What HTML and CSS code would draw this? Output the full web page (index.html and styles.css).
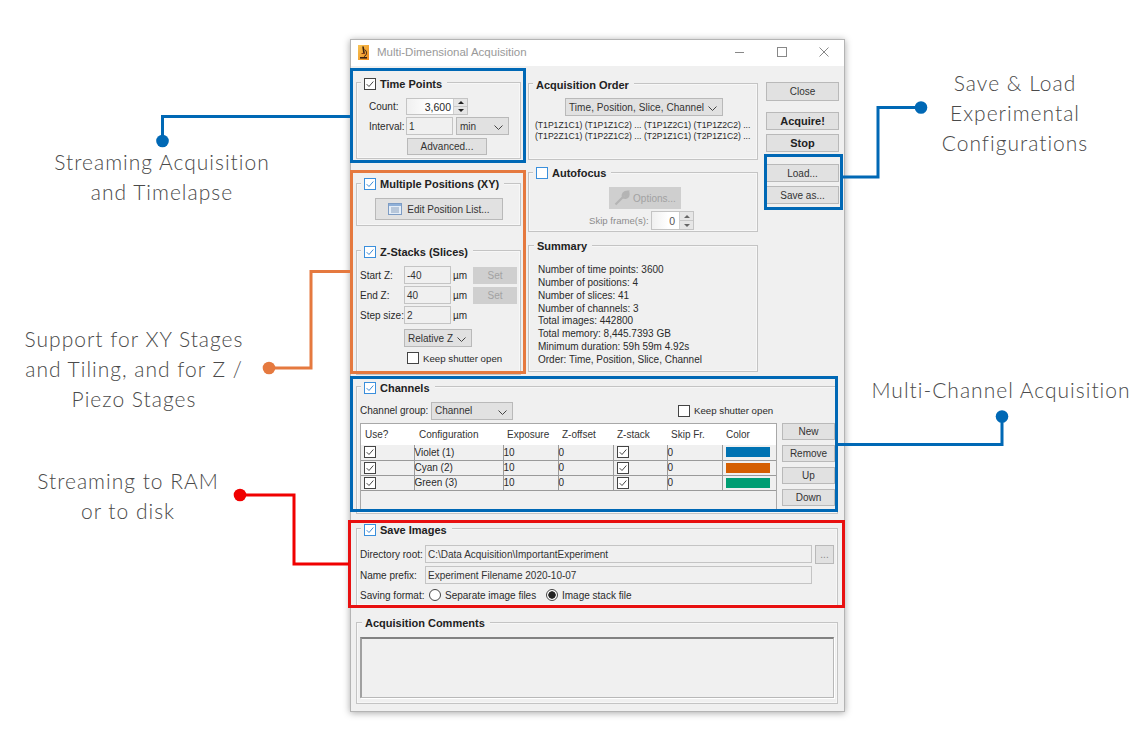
FILE: index.html
```html
<!DOCTYPE html>
<html>
<head>
  <title>Multi-Dimensional Acquisition</title>
  <link rel="stylesheet" href="styles.css">
</head>
<body>
  <svg class="defs" width="0" height="0">
    <symbol id="tick" viewBox="0 0 12 12"><path d="M2 6.2 L4.8 9 L10 3" fill="none" stroke="currentColor" stroke-width="1.1"/></symbol>
    <symbol id="chev" viewBox="0 0 9 5"><path d="M.5 .5 L4.5 4.5 L8.5 .5" fill="none" stroke="#444" stroke-width="1"/></symbol>
    <linearGradient id="app-bg" x1="0" y1="0" x2="1" y2="1">
      <stop offset="0" stop-color="#f7c455"/>
      <stop offset="1" stop-color="#ee8a1c"/>
    </linearGradient>
  </svg>

  <div class="window">
    <div class="titlebar">
      <svg class="app-icon" width="11" height="15" viewBox="0 0 11 15">
        <rect width="11" height="15" fill="url(#app-bg)"/>
        <path d="M5 1.5 L6 8" stroke="#3a2212" stroke-width="1.6" fill="none"/>
        <path d="M6.6 4.5 C9.2 6 9.2 10.5 6 11.5" stroke="#3a2212" stroke-width="1" fill="none"/>
        <path d="M3.5 8.5 H7" stroke="#8a3a12" stroke-width="1" fill="none"/>
        <path d="M2 12.8 H9" stroke="#3a2212" stroke-width="1.6" fill="none"/>
      </svg>
      <span class="title">Multi-Dimensional Acquisition</span>
      <svg class="win-controls" width="94" height="12" viewBox="0 0 94 12">
        <path d="M0 6.5 H9" stroke="#888" fill="none"/>
        <rect x="42.5" y="1.5" width="9" height="9" stroke="#888" fill="none"/>
        <path d="M84.5 1.5 L93.5 10.5 M93.5 1.5 L84.5 10.5" stroke="#888" fill="none"/>
      </svg>
    </div>

    <div class="content">
      <div class="upper">
        <div class="col-left">
          <div class="group time-points">
            <div class="legend legend-low"><span class="check"><svg><use href="#tick"/></svg></span>Time Points</div>
            <div class="row">
              <span class="row-label">Count:</span>
              <div class="spinner spinner-count">
                <span class="spin-value">3,600</span>
                <span class="spin-arrows"><i class="up"></i><i class="down"></i></span>
              </div>
            </div>
            <div class="row">
              <span class="row-label">Interval:</span>
              <span class="input interval-input">1</span>
              <div class="select unit-select">min<svg class="chev"><use href="#chev"/></svg></div>
            </div>
            <div class="btn advanced-btn">Advanced...</div>
          </div>

          <div class="group positions">
            <div class="legend"><span class="check check-blue"><svg><use href="#tick"/></svg></span>Multiple Positions (XY)</div>
            <div class="btn edit-list-btn">
              <svg width="14" height="12" viewBox="0 0 14 12">
                <rect x=".5" y=".5" width="13" height="11" fill="#e4edf7" stroke="#7d9cc4"/>
                <rect x="1" y="1" width="12" height="2" fill="#8fb0d8"/>
                <path d="M3 5 H11 M3 7 H11 M3 9 H11" stroke="#8aa0bc"/>
              </svg>
              Edit Position List...
            </div>
          </div>

          <div class="group zstacks">
            <div class="legend legend-low"><span class="check check-blue"><svg><use href="#tick"/></svg></span>Z-Stacks (Slices)</div>
            <div class="z-grid">
              <span>Start Z:</span><span class="input">-40</span><span>µm</span><span class="btn btn-off">Set</span>
              <span>End Z:</span><span class="input">40</span><span>µm</span><span class="btn btn-off">Set</span>
              <span>Step size:</span><span class="input">2</span><span>µm</span><span></span>
            </div>
            <div class="select relative-select">Relative Z<svg class="chev"><use href="#chev"/></svg></div>
            <div class="shutter-row"><span class="check"></span>Keep shutter open</div>
          </div>
        </div>

        <div class="col-mid">
          <div class="group order">
            <div class="legend legend-low">Acquisition Order</div>
            <div class="select order-select">Time, Position, Slice, Channel<svg class="chev"><use href="#chev"/></svg></div>
            <p class="order-text">(T1P1Z1C1) (T1P1Z1C2) ... (T1P1Z2C1) (T1P1Z2C2) ...<br>(T1P2Z1C1) (T1P2Z1C2) ... (T2P1Z1C1) (T2P1Z1C2) ...</p>
          </div>

          <div class="group autofocus">
            <div class="legend"><span class="check check-blue"></span>Autofocus</div>
            <div class="btn btn-off options-btn">
              <svg width="16" height="16" viewBox="0 0 16 16">
                <path d="M1.5 14.5 L9 7 M9 7 C8 4 10 1.5 13.5 1.5 L11 4.5 L12 6 L14.5 3.5 C15 7 12 9 9 7" fill="#bdbdbd" stroke="#b4b4b4" stroke-width="2.2"/>
              </svg>
              Options...
            </div>
            <div class="skip-row">
              <span class="skip-label">Skip frame(s):</span>
              <div class="spinner spinner-skip">
                <span class="spin-value">0</span>
                <span class="spin-arrows"><i class="up"></i><i class="down"></i></span>
              </div>
            </div>
          </div>

          <div class="group summary">
            <div class="legend legend-plain">Summary</div>
            <div class="summary-lines">
              <div>Number of time points: 3600</div>
              <div>Number of positions: 4</div>
              <div>Number of slices: 41</div>
              <div>Number of channels: 3</div>
              <div>Total images: 442800</div>
              <div>Total memory: 8,445.7393 GB</div>
              <div>Minimum duration: 59h 59m 4.92s</div>
              <div>Order: Time, Position, Slice, Channel</div>
            </div>
          </div>
        </div>

        <div class="col-right">
          <div class="btn close-btn">Close</div>
          <div class="btn btn-bold">Acquire!</div>
          <div class="btn btn-bold">Stop</div>
          <div class="btn load-btn">Load...</div>
          <div class="btn save-btn">Save as...</div>
        </div>
      </div>

      <div class="group channels">
        <div class="legend legend-low"><span class="check check-blue"><svg><use href="#tick"/></svg></span>Channels</div>
        <div class="channel-head">
          <span class="channel-label">Channel group:</span>
          <div class="select channel-select">Channel<svg class="chev"><use href="#chev"/></svg></div>
          <div class="shutter-row channel-shutter"><span class="check"></span>Keep shutter open</div>
        </div>
        <div class="channel-body">
          <div class="table-wrap">
            <table class="channel-table">
              <colgroup>
                <col class="c-use"><col class="c-conf"><col class="c-exp"><col class="c-off"><col class="c-stack"><col class="c-skip"><col class="c-color">
              </colgroup>
              <thead>
                <tr><th>Use?</th><th class="th-conf">Configuration</th><th>Exposure</th><th>Z-offset</th><th>Z-stack</th><th>Skip Fr.</th><th>Color</th></tr>
              </thead>
              <tbody>
                <tr>
                  <td class="cell-check"><span class="check"><svg><use href="#tick"/></svg></span></td><td>Violet (1)</td><td>10</td><td>0</td>
                  <td class="cell-check"><span class="check"><svg><use href="#tick"/></svg></span></td><td>0</td><td class="cell-color"><span class="swatch swatch-blue"></span></td>
                </tr>
                <tr>
                  <td class="cell-check"><span class="check"><svg><use href="#tick"/></svg></span></td><td>Cyan (2)</td><td>10</td><td>0</td>
                  <td class="cell-check"><span class="check"><svg><use href="#tick"/></svg></span></td><td>0</td><td class="cell-color"><span class="swatch swatch-orange"></span></td>
                </tr>
                <tr>
                  <td class="cell-check"><span class="check"><svg><use href="#tick"/></svg></span></td><td>Green (3)</td><td>10</td><td>0</td>
                  <td class="cell-check"><span class="check"><svg><use href="#tick"/></svg></span></td><td>0</td><td class="cell-color"><span class="swatch swatch-green"></span></td>
                </tr>
              </tbody>
            </table>
          </div>
          <div class="channel-btns">
            <div class="btn">New</div>
            <div class="btn">Remove</div>
            <div class="btn">Up</div>
            <div class="btn">Down</div>
          </div>
        </div>
      </div>

      <div class="group save-images">
        <div class="legend legend-low"><span class="check check-blue"><svg><use href="#tick"/></svg></span>Save Images</div>
        <div class="save-row">
          <span class="save-label">Directory root:</span>
          <span class="input path-input">C:\Data Acquisition\ImportantExperiment</span>
          <div class="btn dots-btn">...</div>
        </div>
        <div class="save-row">
          <span class="save-label">Name prefix:</span>
          <span class="input path-input">Experiment Filename 2020-10-07</span>
        </div>
        <div class="format-row">
          <span class="save-label">Saving format:</span>
          <span class="radio"></span><span class="radio-text">Separate image files</span>
          <span class="radio radio-on"></span><span>Image stack file</span>
        </div>
      </div>

      <div class="group comments">
        <div class="legend legend-plain">Acquisition Comments</div>
        <div class="comment-box"></div>
      </div>
    </div>
  </div>

  <!-- callout boxes and leader lines drawn over the dialog -->
  <svg class="marks" width="1148" height="750" viewBox="0 0 1148 750">
    <g fill="none" stroke-width="3">
      <rect x="351.5" y="69.5" width="173" height="92" stroke="#0068b5"/>
      <rect x="351.5" y="171.5" width="173" height="201" stroke="#e5793f"/>
      <rect x="351.5" y="377.5" width="485" height="133" stroke="#0068b5"/>
      <rect x="765.5" y="155.5" width="76" height="53" stroke="#0068b5"/>
      <rect x="349.5" y="521.5" width="494" height="85" stroke="#e81010"/>
      <path d="M351 116.5 H162.5 V141" stroke="#0068b5"/>
      <path d="M351 271.5 H311 V368 H269" stroke="#e5793f"/>
      <path d="M349 564 H294 V495 H240" stroke="#f00000"/>
      <path d="M840 177 H878 V107.5 H921" stroke="#0068b5"/>
      <path d="M838 444.5 H1002 V417" stroke="#0068b5"/>
    </g>
    <circle cx="162.5" cy="141" r="6.3" fill="#0068b5"/>
    <circle cx="269" cy="368" r="6.3" fill="#e5793f"/>
    <circle cx="240" cy="495" r="6.3" fill="#f00000"/>
    <circle cx="921" cy="107.5" r="6.3" fill="#0068b5"/>
    <circle cx="1002" cy="416.5" r="6.3" fill="#0068b5"/>
  </svg>

  <div class="note note-stream">Streaming Acquisition<br>and Timelapse</div>
  <div class="note note-stages">Support for XY Stages<br>and Tiling, and for Z /<br>Piezo Stages</div>
  <div class="note note-ram">Streaming to RAM<br>or to disk</div>
  <div class="note note-save">Save &amp; Load<br>Experimental<br>Configurations</div>
  <div class="note note-multi">Multi-Channel Acquisition</div>
</body>
</html>
```

FILE: styles.css
```css
* {
  box-sizing: border-box;
}
body {
  margin: 0;
  background: #fff;
  font-family: "Liberation Sans", Arial, sans-serif;
  font-size: 10px;
  color: #2a2a2a;
  position: relative;
  height: 750px;
  overflow: hidden;
}
.defs {
  position: absolute;
}

/* dialog frame */
.window {
  width: 495px;
  height: 673px;
  margin: 39px 0 0 350px;
  border: 1px solid #b4b4b4;
  background: #f0f0f0;
  box-shadow: 0 1px 7px rgba(0, 0, 0, 0.35);
}
.titlebar {
  height: 26px;
  background: #fff;
  display: flex;
  align-items: center;
  padding: 0 0 2px 7px;
}
.title {
  margin-left: 8px;
  font-size: 11.5px;
  color: #999;
}
.win-controls {
  margin-left: 208px;
}
.content {
  padding: 16px 5px 0 5px;
}
.upper {
  display: flex;
  height: 293px;
}
.col-left {
  width: 165px;
  margin-right: 7px;
}
.col-mid {
  width: 230px;
  margin-top: 1px;
  margin-right: 8px;
}
.col-right {
  width: 73px;
}

/* titled boxes */
.group {
  position: relative;
  border: 1px solid #c4c4c4;
  box-shadow: inset 0 0 0 1px #f7f7f7;
}
.legend {
  position: absolute;
  top: -7px;
  left: 4px;
  height: 14px;
  display: flex;
  align-items: center;
  padding: 0 5px 0 3px;
  background: #f0f0f0;
  font-size: 11px;
  font-weight: bold;
  color: #222;
  white-space: nowrap;
}
.legend-low {
  top: -6px;
}
.legend-plain {
  left: 5px;
}
.check {
  flex: none;
  display: inline-block;
  width: 12px;
  height: 12px;
  border: 1px solid #444;
  background: #fff;
  color: #333;
  vertical-align: top;
}
.legend .check {
  margin-right: 4px;
}
.check svg {
  display: block;
  width: 10px;
  height: 10px;
}
.check-blue {
  border-color: #3a8fdc;
  color: #2a7fd0;
}

/* controls */
.btn {
  display: flex;
  align-items: center;
  justify-content: center;
  background: #e1e1e1;
  border: 1px solid #b9b9b9;
  color: #333;
}
.btn-off {
  background: #cfcfcf;
  border-color: #cfcfcf;
  color: #a2a2a2;
}
.btn-bold {
  height: 18px;
  margin-bottom: 4px;
  font-size: 11px;
  font-weight: bold;
  color: #222;
}
.input {
  display: flex;
  align-items: center;
  height: 18px;
  padding-left: 2px;
  border: 1px solid #c4c4c4;
  color: #333;
}
.select {
  position: relative;
  display: flex;
  align-items: center;
  height: 18px;
  padding-left: 3px;
  background: #e1e1e1;
  border: 1px solid #b9b9b9;
  color: #333;
}
.chev {
  position: absolute;
  right: 5px;
  top: 7px;
  width: 9px;
  height: 5px;
}
.spinner {
  display: flex;
  height: 18px;
  border: 1px solid #c4c4c4;
  background: linear-gradient(to right, #f0f0f0, #fff 40%);
}
.spin-value {
  flex: 1;
  display: flex;
  align-items: center;
  justify-content: flex-end;
  padding-right: 2px;
  font-size: 10.5px;
}
.spin-arrows {
  width: 14px;
  display: flex;
  flex-direction: column;
  background: #e6e6e6;
  border-left: 1px solid #d0d0d0;
}
.spin-arrows i {
  flex: 1;
  display: flex;
  align-items: center;
  justify-content: center;
}
.spin-arrows i::before {
  content: "";
  border-left: 3px solid transparent;
  border-right: 3px solid transparent;
}
.spin-arrows .up::before {
  border-bottom: 3px solid #222;
}
.spin-arrows .down {
  border-top: 1px solid #c8c8c8;
}
.spin-arrows .down::before {
  border-top: 3px solid #222;
}
.radio {
  flex: none;
  width: 12px;
  height: 12px;
  border: 1px solid #444;
  border-radius: 50%;
  background: #fff;
}
.radio-on {
  background: radial-gradient(circle, #222 3.4px, #fff 4px);
}

/* time points */
.time-points {
  height: 77px;
  padding: 15px 0 0 12px;
}
.row {
  display: flex;
  align-items: center;
  margin-bottom: 2px;
}
.row-label {
  width: 37px;
}
.spinner-count {
  width: 62px;
  height: 17px;
}
.interval-input {
  width: 47px;
  margin-right: 3px;
}
.unit-select {
  width: 53px;
}
.advanced-btn {
  width: 80px;
  height: 17px;
  margin: 3px 0 0 38px;
}

/* positions */
.positions {
  height: 43px;
  margin-top: 24px;
  padding: 14px 0 0 18px;
}
.edit-list-btn {
  width: 128px;
  height: 22px;
  gap: 5px;
}

/* z stacks */
.zstacks {
  height: 125px;
  margin-top: 24px;
  padding: 15px 0 0 3px;
}
.z-grid {
  display: grid;
  grid-template-columns: 44px 47px 22px 44px;
  grid-auto-rows: 18px;
  row-gap: 2px;
  align-items: center;
}
.z-grid span:nth-child(4n + 3) {
  padding-left: 2px;
}
.z-grid .btn {
  height: 17px;
}
.relative-select {
  width: 68px;
  margin: 5px 0 0 44px;
}
.shutter-row {
  display: flex;
  align-items: center;
  gap: 4px;
  margin: 5px 0 0 47px;
  font-size: 9.7px;
}

/* acquisition order */
.order {
  height: 77px;
  padding: 14px 0 0 6px;
}
.order-select {
  width: 158px;
  margin-left: 30px;
  letter-spacing: 0.07px;
}
.order-text {
  margin: 4px 0 0;
  font-size: 8.6px;
  line-height: 11px;
  white-space: nowrap;
}

/* autofocus */
.autofocus {
  height: 60px;
  margin-top: 12px;
  padding: 14px 0 0 80px;
}
.options-btn {
  width: 72px;
  height: 22px;
  gap: 3px;
}
.skip-row {
  display: flex;
  align-items: center;
  margin: 2px 0 0 -20px;
  color: #8c8c8c;
}
.skip-label {
  width: 62px;
  font-size: 9.6px;
}
.spinner-skip {
  width: 43px;
  height: 19px;
  color: #555;
}
.spinner-skip .spin-value {
  padding-right: 4px;
}
.spinner-skip .up::before {
  border-bottom-color: #666;
}
.spinner-skip .down::before {
  border-top-color: #666;
}

/* summary */
.summary {
  height: 127px;
  margin-top: 13px;
  padding: 18px 0 0 9px;
}
.summary-lines {
  line-height: 12.85px;
}

/* right hand buttons */
.close-btn {
  height: 19px;
  margin-bottom: 11px;
}
.load-btn {
  height: 18px;
  margin-top: 12px;
  margin-bottom: 4px;
}
.save-btn {
  height: 18px;
}

/* channels */
.channels {
  height: 128px;
  width: 482px;
  margin-top: 11px;
  padding: 14px 0 0 3px;
}
.channel-head {
  display: flex;
  align-items: center;
  height: 19px;
}
.channel-label {
  width: 71px;
}
.channel-select {
  width: 82px;
}
.channel-shutter {
  margin: 0 0 0 165px;
}
.channel-body {
  display: flex;
  margin-top: 3px;
}
.table-wrap {
  width: 417px;
  height: 89px;
  border: 1px solid #a8a8a8;
}
.channel-table {
  width: 415px;
  table-layout: fixed;
  border-collapse: collapse;
}
.c-use { width: 53px; }
.c-conf { width: 89px; }
.c-exp { width: 55px; }
.c-off { width: 55px; }
.c-stack { width: 54px; }
.c-skip { width: 55px; }
.c-color { width: 54px; }
.channel-table th {
  height: 21px;
  padding: 0 0 0 4px;
  background: #fff;
  font-weight: normal;
  text-align: left;
  color: #333;
}
.channel-table .th-conf {
  padding-left: 5px;
}
.channel-table td {
  height: 15px;
  padding: 0;
  border: 1px solid #9a9a9a;
  border-top: 0;
  white-space: nowrap;
}
.channel-table td:first-child {
  border-left: 0;
}
.channel-table td:last-child {
  border-right: 0;
}
.channel-table .cell-check {
  padding-left: 3px;
}
.channel-table .cell-color {
  padding-left: 3px;
}
.swatch {
  display: block;
  width: 44px;
  height: 10px;
}
.swatch-blue { background: #0072b2; }
.swatch-orange { background: #d55e00; }
.swatch-green { background: #009e73; }
.channel-btns {
  width: 53px;
  margin-left: 5px;
  display: flex;
  flex-direction: column;
  gap: 5px;
}
.channel-btns .btn {
  height: 17px;
}

/* save images */
.save-images {
  width: 482px;
  height: 78px;
  margin-top: 14px;
  padding: 16px 0 0 3px;
}
.save-row {
  display: flex;
  align-items: center;
  height: 18px;
  margin-bottom: 3px;
}
.save-label {
  width: 65px;
}
.path-input {
  width: 387px;
}
.dots-btn {
  width: 19px;
  height: 19px;
  margin-left: 3px;
  color: #888;
}
.format-row {
  display: flex;
  align-items: center;
  height: 16px;
}
.format-row .save-label {
  width: 69px;
}
.format-row .radio {
  margin-right: 4px;
}
.radio-text {
  width: 101px;
}

/* comments */
.comments {
  width: 482px;
  height: 82px;
  margin-top: 16px;
  padding: 14px 0 0 3px;
}
.comment-box {
  width: 474px;
  height: 61px;
  border: 2px solid #a0a0a0;
  border-top-color: #828282;
  border-right: 1px solid #b8b8b8;
  border-bottom: 1px solid #b8b8b8;
  box-shadow: 1px 1px 0 #fff;
}

/* annotations around the dialog */
.marks {
  position: absolute;
  left: 0;
  top: 0;
}
.note {
  position: absolute;
  width: 280px;
  text-align: center;
  font-family: Lato, "Open Sans", sans-serif;
  font-weight: 300;
  font-size: 21px;
  letter-spacing: 1px;
  line-height: 30px;
  color: #4a4a4a;
  white-space: nowrap;
}
.note-stream { left: 22px; top: 147px; }
.note-stages { left: -6px; top: 324px; }
.note-ram { left: -12px; top: 466px; }
.note-save { left: 875px; top: 68px; }
.note-multi { left: 861px; top: 375px; }
```
